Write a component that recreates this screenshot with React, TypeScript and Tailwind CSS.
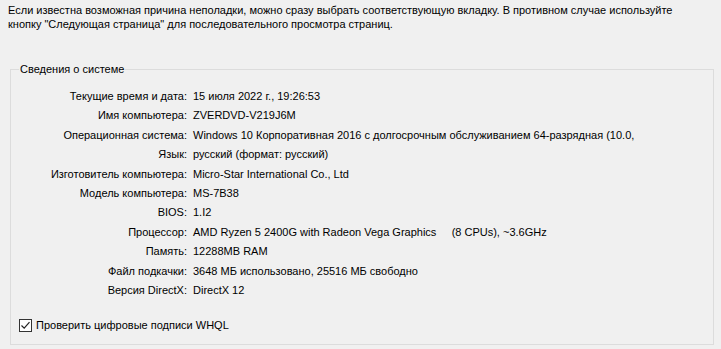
import React from "react";

type Row = { label: string; value: string };

const rows: Row[] = [
  { label: "Текущие время и дата:", value: "15 июля 2022 г., 19:26:53" },
  { label: "Имя компьютера:", value: "ZVERDVD-V219J6M" },
  {
    label: "Операционная система:",
    value:
      "Windows 10 Корпоративная 2016 с долгосрочным обслуживанием 64-разрядная (10.0,",
  },
  { label: "Язык:", value: "русский (формат: русский)" },
  { label: "Изготовитель компьютера:", value: "Micro-Star International Co., Ltd" },
  { label: "Модель компьютера:", value: "MS-7B38" },
  { label: "BIOS:", value: "1.I2" },
  {
    label: "Процессор:",
    value: "AMD Ryzen 5 2400G with Radeon Vega Graphics     (8 CPUs), ~3.6GHz",
  },
  { label: "Память:", value: "12288MB RAM" },
  { label: "Файл подкачки:", value: "3648 МБ использовано, 25516 МБ свободно" },
  { label: "Версия DirectX:", value: "DirectX 12" },
];

const App: React.FC = () => {
  return (
    <div
      className="w-[721px] h-[349px] bg-[#f0f0f0] text-[11px] text-black overflow-hidden"
      style={{ fontFamily: '"Liberation Sans", Arial, sans-serif' }}
    >
      <p className="pl-[8px] pt-[3px] leading-[14px] whitespace-nowrap">
        Если известна возможная причина неполадки, можно сразу выбрать
        соответствующую вкладку. В противном случае используйте
        <br />
        кнопку "Следующая страница" для последовательного просмотра страниц.
      </p>

      <fieldset className="ml-[10px] mr-[7px] mt-[31px] h-[283px] border border-[#dcdcdc] px-[8px] pt-[12px]">
        <legend className="px-[1px] leading-[15px]">Сведения о системе</legend>

        <div className="grid grid-cols-[168px_1fr] gap-x-[6px] gap-y-[4.4px] leading-[15px]">
          {rows.map((row) => (
            <React.Fragment key={row.label}>
              <div className="text-right whitespace-nowrap">{row.label}</div>
              <div className="whitespace-pre">{row.value}</div>
            </React.Fragment>
          ))}
        </div>

        <label className="flex items-center gap-[4px] mt-[20px]">
          <span className="w-[13px] h-[13px] border border-[#333] bg-white flex items-center justify-center">
            <svg width="11" height="11" viewBox="0 0 11 11">
              <path d="M1.5 5.5 L4.2 8.2 L9.5 2.2" fill="none" stroke="#222" strokeWidth="1.2" />
            </svg>
          </span>
          <span className="leading-[15px]">Проверить цифровые подписи WHQL</span>
        </label>
      </fieldset>
    </div>
  );
};

export default App;
